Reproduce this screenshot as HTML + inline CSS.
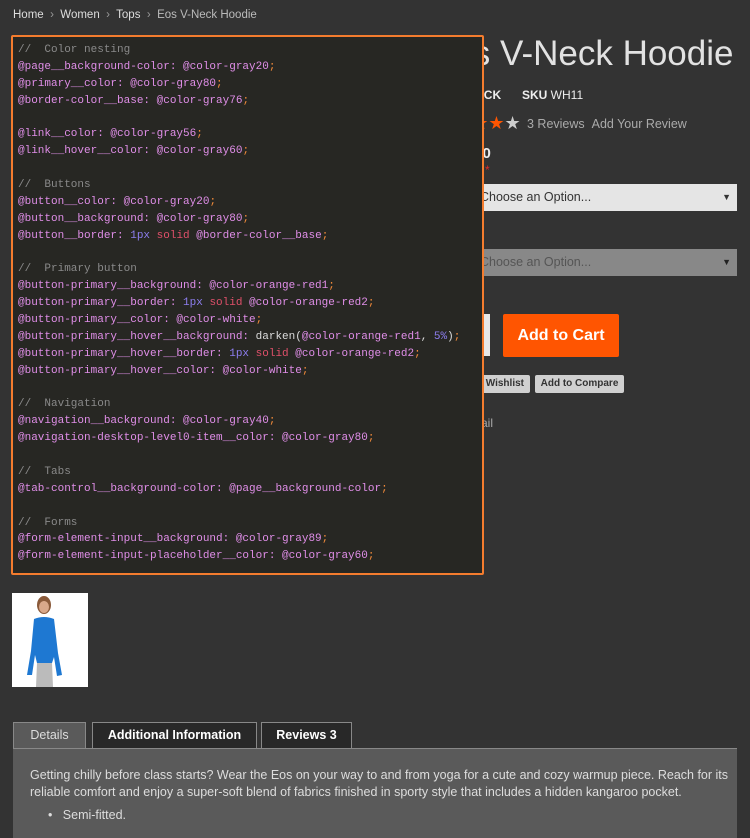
<!DOCTYPE html>
<html><head><meta charset="utf-8"><style>
body{margin:0;width:750px;height:831px;background:#333;position:relative;overflow:hidden;font-family:"Liberation Sans",sans-serif;color:#ddd}
.a{position:absolute;white-space:nowrap}
.code{position:absolute;left:11px;top:35px;width:473px;height:540px;background:#272723;border:2px solid #f47c2e;border-radius:2px;z-index:5;padding:5px 0 0 5px;box-sizing:border-box}
.code pre{margin:0;font-family:"Liberation Mono",monospace;font-size:11px;line-height:16.87px;color:#e08ee8}
.c{color:#8a8a8a}.s{color:#f08a3a}.n{color:#8d7ef0}.r{color:#e0506a}.w{color:#ddd}
.tab{position:absolute;top:722px;height:26px;box-sizing:border-box;font-size:12.5px;font-weight:bold;line-height:25px;text-align:center;border:1px solid #888;border-bottom:none}
</style></head><body>
<div class="a" style="left:13px;top:9px;font-size:11.5px;color:#ddd">Home &nbsp;<span style="color:#999">›</span>&nbsp; Women &nbsp;<span style="color:#999">›</span>&nbsp; Tops &nbsp;<span style="color:#999">›</span>&nbsp; <span style="color:#bbb">Eos V-Neck Hoodie</span></div>
<div class="a" style="left:430px;top:34px;font-size:35px;color:#e2e2e2;font-weight:300">Eos V-Neck Hoodie</div>
<div class="a" style="left:444px;top:88px;font-size:12px;font-weight:bold;color:#eee">IN STOCK</div>
<div class="a" style="left:522px;top:88px;font-size:12px;color:#eee"><b>SKU</b> WH11</div>
<div class="a" style="left:440px;top:113px;font-size:18px;color:#ff5501">★★★★<span style="color:#ccc">★</span></div>
<div class="a" style="left:527px;top:117px;font-size:12.5px;color:#aaa">3 Reviews &nbsp;Add Your Review</div>
<div class="a" style="left:445px;top:145px;font-size:15px;font-weight:bold;color:#eee">$54.00</div>
<div class="a" style="left:485px;top:163px;font-size:12px;color:#e02b27">*</div>
<div class="a" style="left:460px;top:184px;width:277px;height:27px;background:#e5e5e5;color:#333;font-size:12.5px;line-height:27px;padding-left:20px;box-sizing:border-box">Choose an Option...<span style="position:absolute;right:6px;font-size:9px">▼</span></div>
<div class="a" style="left:460px;top:249px;width:277px;height:27px;background:#888;color:#555;font-size:12.5px;line-height:27px;padding-left:20px;box-sizing:border-box">Choose an Option...<span style="position:absolute;right:6px;font-size:9px;color:#222">▼</span></div>
<div class="a" style="left:440px;top:314px;width:50px;height:42px;background:#e8e8e8"></div>
<div class="a" style="left:503px;top:314px;width:116px;height:43px;background:#ff5501;color:#fff;font-weight:bold;font-size:16px;line-height:43px;text-align:center;border-radius:2px">Add to Cart</div>
<div class="a" style="left:440px;top:375px;width:90px;height:18px;background:#d0d0d0;color:#333;font-size:10px;font-weight:bold;line-height:18px;text-align:right;padding-right:6px;box-sizing:border-box;border-radius:2px">Add to Wishlist</div>
<div class="a" style="left:535px;top:375px;width:89px;height:18px;background:#d0d0d0;color:#333;font-size:10px;font-weight:bold;line-height:18px;text-align:center;border-radius:2px">Add to Compare</div>
<div class="a" style="left:463px;top:416px;font-size:12px;color:#aaa">Email</div>
<div class="code"><pre><span class="c">//  Color nesting</span>
@page__background-color: @color-gray20<span class="s">;</span>
@primary__color: @color-gray80<span class="s">;</span>
@border-color__base: @color-gray76<span class="s">;</span>

@link__color: @color-gray56<span class="s">;</span>
@link__hover__color: @color-gray60<span class="s">;</span>

<span class="c">//  Buttons</span>
@button__color: @color-gray20<span class="s">;</span>
@button__background: @color-gray80<span class="s">;</span>
@button__border: <span class="n">1px</span> <span class="r">solid</span> @border-color__base<span class="s">;</span>

<span class="c">//  Primary button</span>
@button-primary__background: @color-orange-red1<span class="s">;</span>
@button-primary__border: <span class="n">1px</span> <span class="r">solid</span> @color-orange-red2<span class="s">;</span>
@button-primary__color: @color-white<span class="s">;</span>
@button-primary__hover__background: <span class="w">darken(</span>@color-orange-red1<span class="w">,</span> <span class="n">5%</span><span class="w">)</span><span class="s">;</span>
@button-primary__hover__border: <span class="n">1px</span> <span class="r">solid</span> @color-orange-red2<span class="s">;</span>
@button-primary__hover__color: @color-white<span class="s">;</span>

<span class="c">//  Navigation</span>
@navigation__background: @color-gray40<span class="s">;</span>
@navigation-desktop-level0-item__color: @color-gray80<span class="s">;</span>

<span class="c">//  Tabs</span>
@tab-control__background-color: @page__background-color<span class="s">;</span>

<span class="c">//  Forms</span>
@form-element-input__background: @color-gray89<span class="s">;</span>
@form-element-input-placeholder__color: @color-gray60<span class="s">;</span></pre></div>
<div class="a" style="left:12px;top:593px;width:76px;height:94px;background:#fff">
<svg width="76" height="94" viewBox="0 0 76 94"><ellipse cx="32" cy="12" rx="7" ry="9" fill="#8a5a3a"/><ellipse cx="32" cy="14" rx="5" ry="6" fill="#d9a88a"/><path d="M22 26 Q32 22 42 26 L46 60 L50 82 L45 83 L42 64 L40 70 L25 70 L23 62 L20 82 L15 82 L19 58 Z" fill="#1e78d2"/><path d="M25 70 L40 70 L41 94 L24 94 Z" fill="#bbb"/></svg></div>
<div class="tab" style="left:13px;width:73px;background:#5a5a5a;color:#ddd;font-weight:normal">Details</div>
<div class="tab" style="left:92px;width:165px;background:#282828;color:#fff">Additional Information</div>
<div class="tab" style="left:261px;width:91px;background:#282828;color:#fff">Reviews 3</div>
<div class="a" style="left:13px;top:748px;width:724px;height:90px;background:#5a5a5a;border-top:1px solid #888;box-sizing:border-box"></div>
<div class="a" style="left:30px;top:767px;font-size:12.5px;line-height:17px;color:#ddd;white-space:normal;width:700px">Getting chilly before class starts? Wear the Eos on your way to and from yoga for a cute and cozy warmup piece. Reach for its reliable comfort and enjoy a super-soft blend of fabrics finished in sporty style that includes a hidden kangaroo pocket.</div>
<div class="a" style="left:48px;top:808px;font-size:12.5px;color:#ddd">•&nbsp;&nbsp; Semi-fitted.</div>
</body></html>
